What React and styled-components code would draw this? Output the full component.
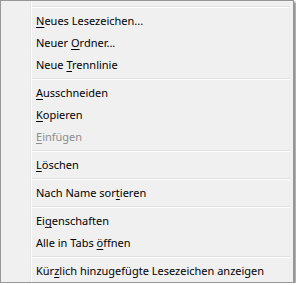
import React from 'react';
import styled, { createGlobalStyle } from 'styled-components';

const GlobalStyle = createGlobalStyle`
  html, body {
    margin: 0;
    padding: 0;
    background: #ffffff;
  }
`;

const Menu = styled.div`
  box-sizing: border-box;
  width: 294px;
  padding: 3px 2px 0 2px;
  border: 1px solid #979797;
  background: linear-gradient(
    to right,
    #f0f0f0 29px,
    #e2e3e3 29px,
    #e2e3e3 30px,
    #ffffff 30px,
    #ffffff 31px,
    #f0f0f0 31px
  );
  box-shadow: 2px 2px 2px rgba(0, 0, 0, 0.45);
  font-family: 'Noto Sans', 'Open Sans', sans-serif;
  font-size: 11px;
  color: #000;
  display: flex;
  flex-direction: column;
`;

const Item = styled.div`
  flex-shrink: 0;
  height: 22px;
  line-height: 22px;
  padding-left: 33px;
  white-space: pre;
  color: ${(p) => (p.$disabled ? '#8d8d8d' : '#000')};

  u {
    text-decoration: underline;
    text-underline-offset: 2px;
  }
`;

const Separator = styled.div`
  flex-shrink: 0;
  height: 6px;
  margin-left: 29px;
  margin-right: 1px;
  display: flex;
  flex-direction: column;
  justify-content: center;

  &::before {
    content: '';
    height: 1px;
    background: #e0e0e0;
  }
  &::after {
    content: '';
    height: 1px;
    background: #ffffff;
  }
`;

const entries = [
  { sep: true },
  { pre: '', key: 'N', post: 'eues Lesezeichen...' },
  { pre: 'Neuer ', key: 'O', post: 'rdner...' },
  { pre: 'Neue ', key: 'T', post: 'rennlinie' },
  { sep: true },
  { pre: '', key: 'A', post: 'usschneiden' },
  { pre: '', key: 'K', post: 'opieren' },
  { pre: '', key: 'E', post: 'infügen', disabled: true },
  { sep: true },
  { pre: '', key: 'L', post: 'öschen' },
  { sep: true },
  { pre: 'Nach Name sor', key: 't', post: 'ieren' },
  { sep: true },
  { pre: 'Ei', key: 'g', post: 'enschaften' },
  { pre: 'Alle in Tabs ', key: 'ö', post: 'ffnen' },
  { sep: true },
  { pre: 'Kür', key: 'z', post: 'lich hinzugefügte Lesezeichen anzeigen' },
];

export default function App() {
  return (
    <>
      <GlobalStyle />
      <Menu>
        {entries.map((e, i) =>
          e.sep ? (
            <Separator key={i} />
          ) : (
            <Item key={i} $disabled={e.disabled}>
              {e.pre}
              <u>{e.key}</u>
              {e.post}
            </Item>
          )
        )}
      </Menu>
    </>
  );
}
